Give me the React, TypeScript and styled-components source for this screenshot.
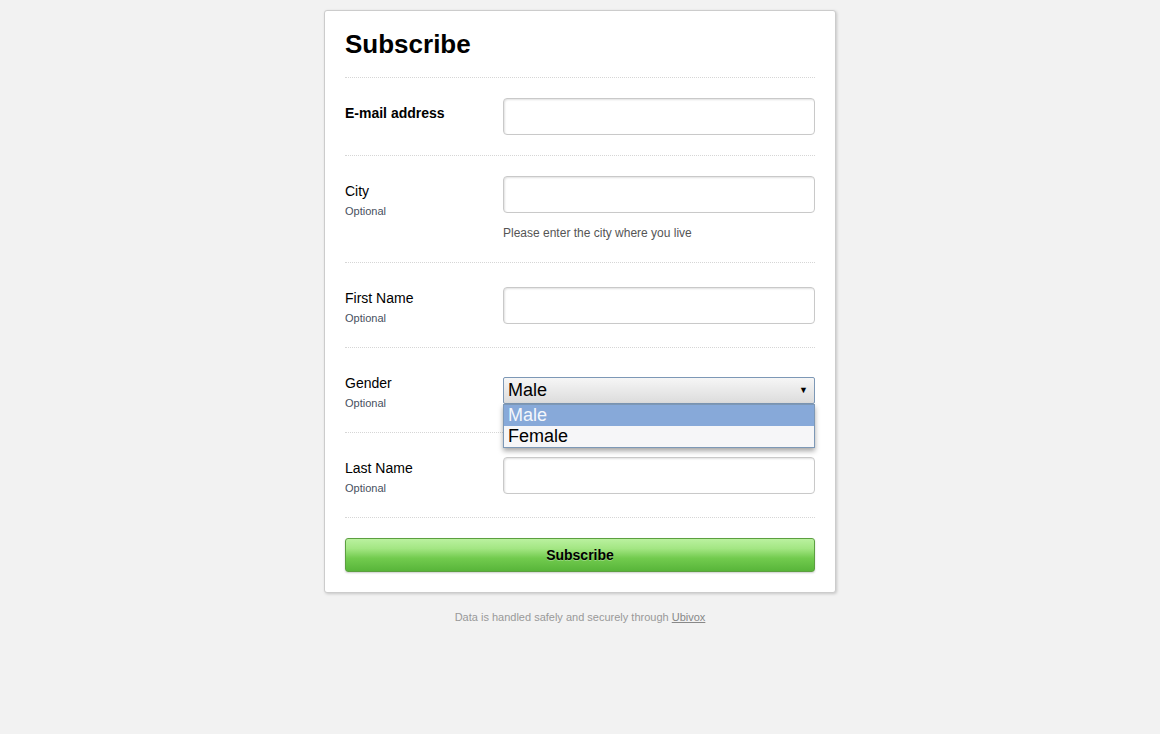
import React from 'react'
import styled, { createGlobalStyle } from 'styled-components'

const GlobalStyle = createGlobalStyle`
  html, body {
    margin: 0;
    padding: 0;
    background: #f2f2f2;
    font-family: 'Liberation Sans', Arial, sans-serif;
  }
  * {
    box-sizing: border-box;
  }
`

const Page = styled.div`
  padding-top: 10px;
  min-height: 734px;
  background: #f2f2f2;
`

const Card = styled.div`
  width: 512px;
  margin: 0 auto;
  background: #fff;
  border: 1px solid #cccccc;
  border-radius: 3px;
  box-shadow: 1px 1px 3px rgba(0, 0, 0, 0.18);
  padding: 18px 20px 20px;
`

const Header = styled.div`
  padding-bottom: 18px;
  border-bottom: 1px dotted #d6d6d6;
`

const Title = styled.h1`
  margin: 0;
  font-size: 26px;
  line-height: 30px;
  font-weight: bold;
  color: #000;
`

const Row = styled.div`
  display: grid;
  grid-template-columns: 158px 1fr;
  padding: 20px 0;
  border-bottom: 1px dotted #d6d6d6;
`

const LabelBox = styled.div`
  align-self: start;
  margin-top: 6px;
  padding-bottom: 1px;
`

const Label = styled.div<{ $bold?: boolean }>`
  font-size: 14px;
  line-height: 18px;
  color: #000;
  font-weight: ${p => (p.$bold ? 'bold' : 'normal')};
`

const Optional = styled.div`
  margin-top: 4px;
  font-size: 11px;
  line-height: 15px;
  color: #47505e;
`

const Field = styled.div`
  align-self: center;
  position: relative;
`

const Input = styled.input`
  display: block;
  width: 100%;
  height: 37px;
  margin: 0;
  border: 1px solid #c9c9c9;
  border-radius: 4px;
  box-shadow: inset 1px 1px 2px rgba(0, 0, 0, 0.12);
  background: #fff;
  font-family: inherit;
  font-size: 14px;
  padding: 0 8px;
  outline: none;
`

const Help = styled.div`
  margin-top: 12px;
  font-size: 12px;
  line-height: 17px;
  color: #555;
`

const Select = styled.div`
  height: 27px;
  border: 1px solid #7d98b6;
  border-radius: 2px;
  background: linear-gradient(#f6f6f6, #e9e9e9 50%, #dcdcdc);
  display: flex;
  align-items: center;
  justify-content: space-between;
  padding: 0 6px 0 4px;
  font-size: 18px;
  color: #000;
`

const Arrow = styled.span`
  font-size: 9px;
  line-height: 1;
`

const Menu = styled.div`
  position: absolute;
  top: 27px;
  left: 0;
  right: 0;
  border: 1px solid #7d98b6;
  background: #f6f6f8;
  box-shadow: 0 3px 5px rgba(0, 0, 0, 0.35);
  z-index: 2;
`

const Option = styled.div<{ $active?: boolean }>`
  height: 21px;
  line-height: 21px;
  padding-left: 4px;
  font-size: 18px;
  background: ${p => (p.$active ? '#87a9d9' : 'transparent')};
  color: ${p => (p.$active ? '#f4f7fc' : '#000')};
`

const Actions = styled.div`
  padding-top: 20px;
`

const Button = styled.button`
  display: block;
  width: 100%;
  height: 34px;
  border: 1px solid #5c9f40;
  border-radius: 3px;
  background: linear-gradient(#baf19f, #a3e683 30%, #72cb4e 60%, #58b53a);
  box-shadow: 0 1px 2px rgba(0, 0, 0, 0.2);
  font-family: inherit;
  font-size: 14px;
  font-weight: bold;
  color: #000;
  text-shadow: 0 1px 0 rgba(255, 255, 255, 0.3);
  cursor: pointer;
`

const Footer = styled.div`
  margin-top: 17px;
  text-align: center;
  font-size: 11px;
  line-height: 14px;
  color: #999;
  a {
    color: #888;
    text-decoration: underline;
  }
`

interface IField {
  label: string
  optional?: boolean
  help?: string
}

const fields: IField[] = [
  { label: 'E-mail address' },
  { label: 'City', optional: true, help: 'Please enter the city where you live' },
  { label: 'First Name', optional: true },
]

const App = () => {
  return (
    <Page>
      <GlobalStyle />
      <Card>
        <Header>
          <Title>Subscribe</Title>
        </Header>
        {fields.map(f => (
          <Row key={f.label}>
            <LabelBox>
              <Label $bold={!f.optional}>{f.label}</Label>
              {f.optional && <Optional>Optional</Optional>}
            </LabelBox>
            <Field>
              <Input type="text" />
              {f.help && <Help>{f.help}</Help>}
            </Field>
          </Row>
        ))}
        <Row>
          <LabelBox>
            <Label>Gender</Label>
            <Optional>Optional</Optional>
          </LabelBox>
          <Field>
            <Select>
              <span>Male</span>
              <Arrow>▼</Arrow>
            </Select>
            <Menu>
              <Option $active>Male</Option>
              <Option>Female</Option>
            </Menu>
          </Field>
        </Row>
        <Row>
          <LabelBox>
            <Label>Last Name</Label>
            <Optional>Optional</Optional>
          </LabelBox>
          <Field>
            <Input type="text" />
          </Field>
        </Row>
        <Actions>
          <Button>Subscribe</Button>
        </Actions>
      </Card>
      <Footer>
        Data is handled safely and securely through <a href="#">Ubivox</a>
      </Footer>
    </Page>
  )
}

export default App
